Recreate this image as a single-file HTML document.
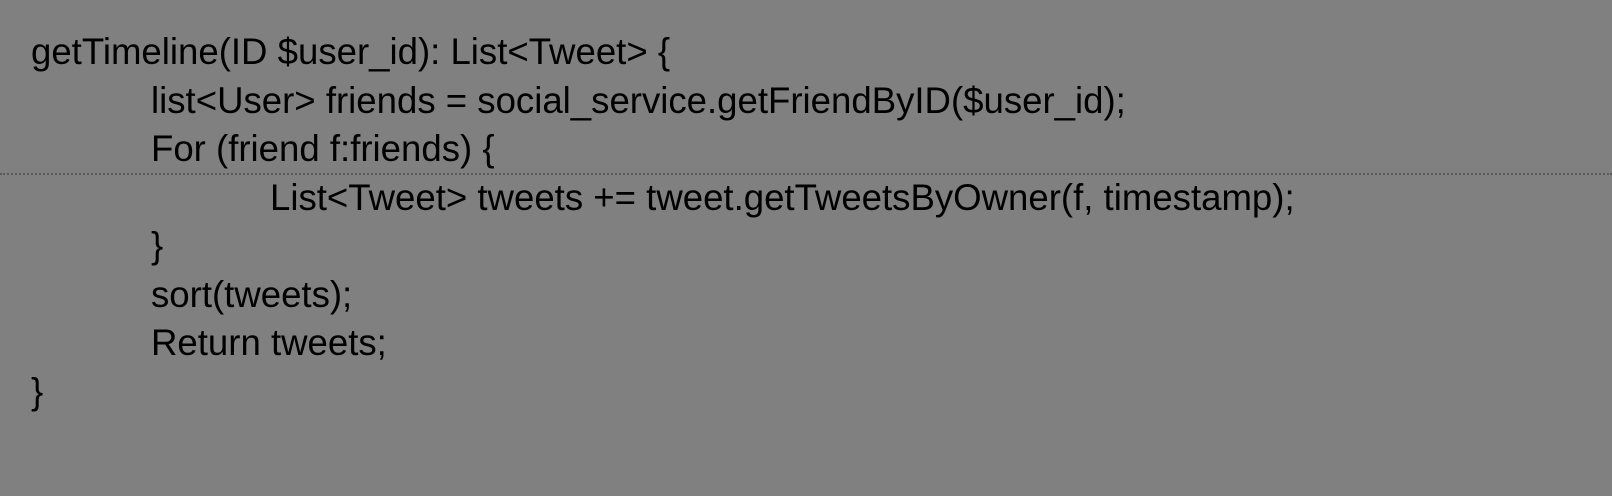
<!DOCTYPE html>
<html><head><style>
html,body{margin:0;padding:0;}
body{width:1612px;height:496px;background:#808080;position:relative;overflow:hidden;font-family:"Liberation Sans",Arial,sans-serif;font-size:36.6px;color:#000;}
.l{position:absolute;white-space:pre;line-height:1;}
.dot{position:absolute;left:0;top:173px;width:1612px;height:0;border-top:2px dotted #5a5a5a;}
</style></head><body>
<div class="dot"></div>
<div class="l" style="left:31px;top:34px">getTimeline(ID $user_id): List&lt;Tweet&gt; {</div>
<div class="l" style="left:151px;top:83px">list&lt;User&gt; friends = social_service.getFriendByID($user_id);</div>
<div class="l" style="left:151px;top:131px">For (friend f:friends) {</div>
<div class="l" style="left:270px;top:180px">List&lt;Tweet&gt; tweets += tweet.getTweetsByOwner(f, timestamp);</div>
<div class="l" style="left:151px;top:228px">}</div>
<div class="l" style="left:151px;top:277px">sort(tweets);</div>
<div class="l" style="left:151px;top:325px">Return tweets;</div>
<div class="l" style="left:31px;top:374px">}</div>
</body></html>
